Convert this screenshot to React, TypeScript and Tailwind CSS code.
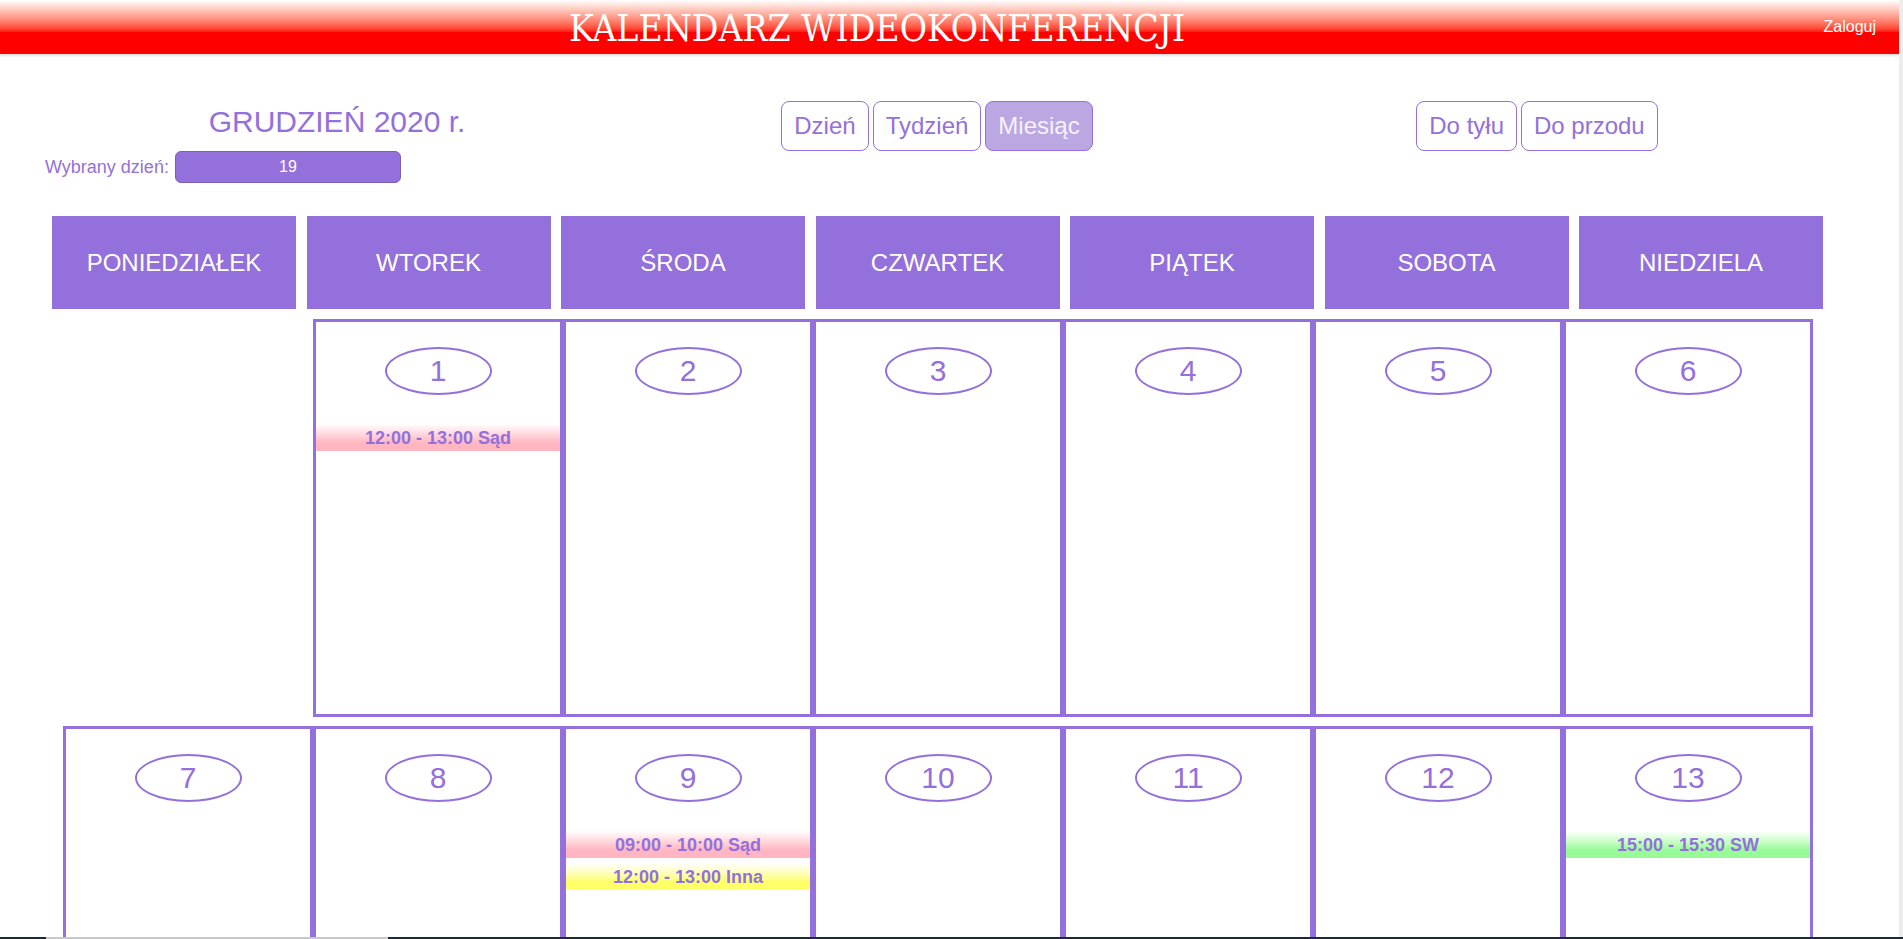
import React from "react"

const weekDays = ["PONIEDZIAŁEK", "WTOREK", "ŚRODA", "CZWARTEK", "PIĄTEK", "SOBOTA", "NIEDZIELA"]

type Meeting = { label: string; tone: "pink" | "yellow" | "green" }

const meetings: Record<number, Meeting[]> = {
  1: [{ label: "12:00 - 13:00 Sąd", tone: "pink" }],
  9: [
    { label: "09:00 - 10:00 Sąd", tone: "pink" },
    { label: "12:00 - 13:00 Inna", tone: "yellow" },
  ],
  13: [{ label: "15:00 - 15:30 SW", tone: "green" }],
}

const toneClass = {
  pink: "bg-linear-to-b from-white from-15% to-[#ffb6c1] to-75%",
  yellow: "bg-linear-to-b from-white from-15% to-[#ffff66] to-75%",
  green: "bg-linear-to-b from-white from-15% to-[#98fb98] to-75%",
}

// grudzień 2020 zaczyna się we wtorek; widoczne są dwa pierwsze tygodnie
const cells: (number | null)[] = [null, ...Array.from({ length: 13 }, (_, i) => i + 1)]

function DayCell({ day }: { day: number | null }) {
  if (day === null) return <div />
  return (
    <div className="border-[3px] border-[#9370db] flex flex-col items-center">
      <div className="mt-[25px] w-[107px] h-[48px] rounded-[50%] border-2 border-[#9370db] flex items-center justify-center text-[30px] leading-none text-[#9370db]">
        {day}
      </div>
      <div className="mt-[24px] w-full">
        {(meetings[day] || []).map((m, i) => (
          <div
            key={i}
            className={`h-8 pt-[11px] text-center text-[18px] leading-[17px] font-bold text-[#9370db] ${toneClass[m.tone]}`}
          >
            {m.label}
          </div>
        ))}
      </div>
    </div>
  )
}

export default function App() {
  return (
    <div className="relative h-screen overflow-hidden bg-white font-['Liberation_Sans',Arial,sans-serif]">
      <header className="flex h-[54px] bg-linear-to-b from-white to-[#ff0000] to-60% shadow-[0_2px_2px_rgba(0,0,0,0.12)]">
        <div className="w-[1754px] text-center text-white text-[37px] leading-[58px] whitespace-nowrap font-['DejaVu_Serif_Condensed','DejaVu_Serif',serif] [font-stretch:condensed]">
          KALENDARZ WIDEOKONFERENCJI
        </div>
        <div className="flex-1 pr-[27px] pt-[17px] text-right text-white text-[16px] leading-[20px]">
          <a href="#">Zaloguj</a>
        </div>
      </header>

      <div className="flex h-[162px] pl-[37px] pt-[47px]">
        <div className="w-[600px] pt-[5px]">
          <h2 className="text-center text-[30px] leading-[32px] text-[#9370db]">GRUDZIEŃ 2020 r.</h2>
          <div className="mt-[13px] flex items-center pl-[8px]">
            <span className="text-[18px] text-[#9370db]">Wybrany dzień:</span>
            <div className="ml-[6px] w-[226px] h-[32px] rounded-[6px] border border-[#7a5fb2] bg-[#9370db] text-white text-[16px] flex items-center justify-center">
              19
            </div>
          </div>
        </div>
        <div className="w-[600px] flex justify-center gap-[4px]">
          {["Dzień", "Tydzień", "Miesiąc"].map((label) => (
            <button
              key={label}
              className={`h-[50px] px-[12px] rounded-[8px] border border-[#9370db] text-[24px] ${
                label === "Miesiąc" ? "bg-[#bba8e3] text-[#f6f2ff]" : "bg-white text-[#9370db]"
              }`}
            >
              {label}
            </button>
          ))}
        </div>
        <div className="w-[600px] flex justify-center gap-[4px]">
          {["Do tyłu", "Do przodu"].map((label) => (
            <button
              key={label}
              className="h-[50px] px-[12px] rounded-[8px] border border-[#9370db] bg-white text-[24px] text-[#9370db]"
            >
              {label}
            </button>
          ))}
        </div>
      </div>

      <div className="ml-[52px] w-[1771px] grid grid-cols-7 gap-x-[10.5px]">
        {weekDays.map((d) => (
          <div key={d} className="h-[93px] bg-[#9370db] flex items-center justify-center text-white text-[24px]">
            {d}
          </div>
        ))}
      </div>

      <div className="mt-[10px] ml-[63px] w-[1750px] grid grid-cols-7 auto-rows-[398px] gap-y-[9px]">
        {cells.map((day, i) => (
          <DayCell key={i} day={day} />
        ))}
      </div>

      <div className="fixed top-0 right-0 w-[4px] h-full bg-[#ededed]" />
      <div className="fixed bottom-0 left-0 w-full h-[2px] bg-[#1c2a35] pl-[46px]">
        <div className="w-[342px] h-full bg-[#c8c8c8]" />
      </div>
    </div>
  )
}
